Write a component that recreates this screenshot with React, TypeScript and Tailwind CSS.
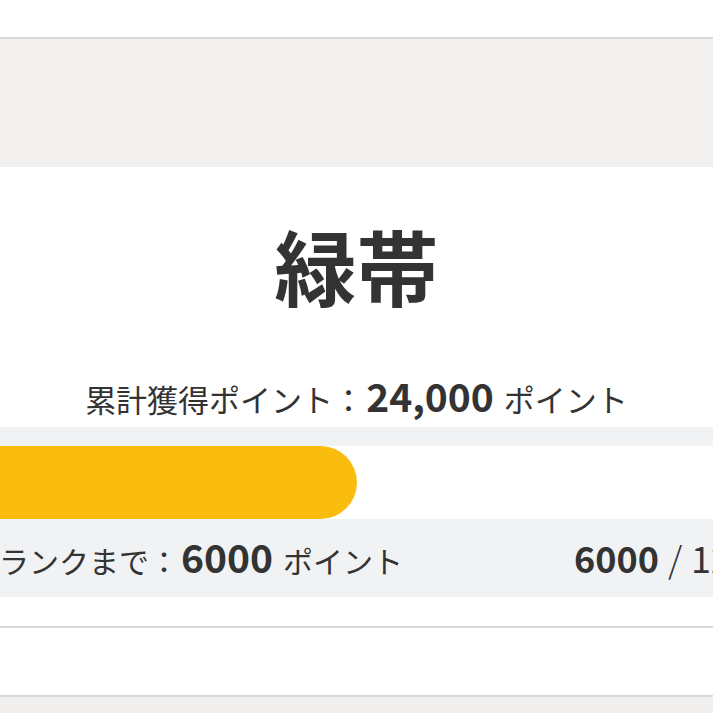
import React from 'react';

const font = { fontFamily: '"Noto Sans CJK JP", "Noto Sans", sans-serif' };

export default function App() {
  const current = 6000;
  const goal = 12000;
  const pct = (current / goal) * 100;

  return (
    <div className="w-[713px] h-[713px] overflow-hidden bg-white text-[#333333]" style={font}>
      <div className="h-[37px] bg-white" />
      <div className="h-[130px] bg-[#f1f0ef] border-t-2 border-[#d8d8d8]" />

      <section className="flex flex-col items-center bg-white">
        <h1 className="mt-[43px] h-[110px] flex items-center text-[82px] font-bold leading-none">
          緑帯
        </h1>
        <p className="mt-[56px] h-[50px] flex items-baseline text-[31px] leading-none whitespace-nowrap">
          <span>累計獲得ポイント：</span>
          <span className="ml-[2px] text-[39px] font-bold">24,000</span>
          <span className="ml-[10px]">ポイント</span>
        </p>
      </section>

      <div className="bg-[#f1f2f4] h-[170px] mt-[1px] flex justify-center overflow-hidden">
        <div className="w-[913px] shrink-0 flex flex-col">
          <div className="mt-[19px] mx-[40px] h-[73px] rounded-full bg-white overflow-hidden">
            <div className="h-full rounded-full bg-[#fabd0d]" style={{ width: `${pct}%` }} />
          </div>
          <div className="flex items-center justify-between h-[78px] pb-[3px] pl-[39px] pr-[22px] whitespace-nowrap">
            <p className="flex items-baseline text-[30px] leading-none">
              <span>次のランクまで：</span>
              <span className="ml-[2px] text-[39px] font-bold">6000</span>
              <span className="ml-[10px]">ポイント</span>
            </p>
            <p className="flex items-baseline text-[36px] leading-none">
              <span className="font-bold">6000</span>
              <span className="mx-[9px] font-light">/</span>
              <span className="font-normal">12000</span>
            </p>
          </div>
        </div>
      </div>

      <div className="h-[29px] bg-white" />
      <div className="h-[69px] bg-white border-t-2 border-[#d8d8d8]" />
      <div className="h-[20px] bg-[#f0efee] border-t-2 border-[#d8d8d8]" />
    </div>
  );
}
